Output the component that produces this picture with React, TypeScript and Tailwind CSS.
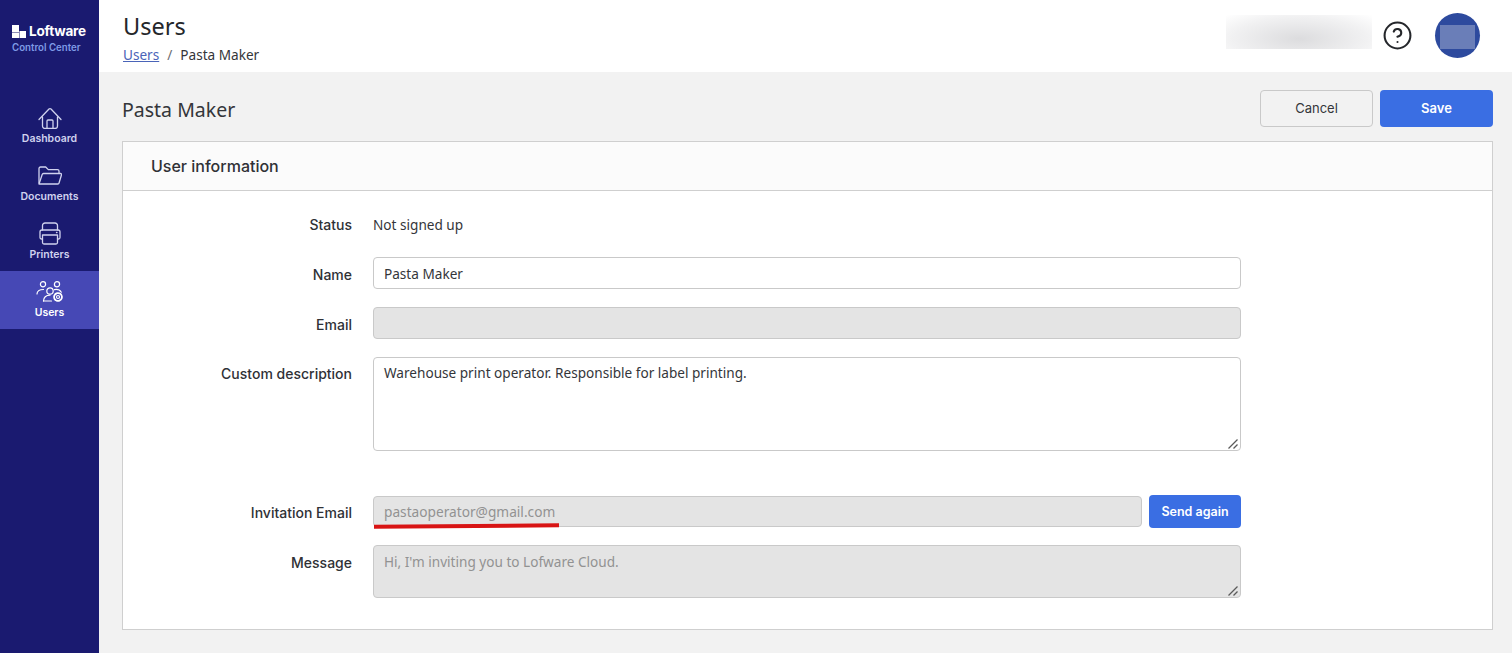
import { CircleHelp } from "lucide-react";
import type { ReactNode } from "react";

const BODY = "font-['Noto_Sans','Inter',sans-serif]";

function HomeIcon() {
  return (
    <svg width="24" height="22" viewBox="0 0 24 22" fill="none" stroke="currentColor" strokeWidth="1.3" strokeLinejoin="round" strokeLinecap="round">
      <path d="M1 12.500 11 2a1.400 1.400 0 0 1 2 0l10 10.500" />
      <path d="M4.500 10v9a2.500 2.500 0 0 0 2.500 2.500h10a2.500 2.500 0 0 0 2.500-2.500v-9" />
      <path d="M9 21.500V14a1 1 0 0 1 1-1h4a1 1 0 0 1 1 1v7.500" />
    </svg>
  );
}

function FolderIcon() {
  return (
    <svg width="24" height="19" viewBox="0 0 24 19" fill="none" stroke="currentColor" strokeWidth="1.3" strokeLinejoin="round" strokeLinecap="round">
      <path d="M1 17V2.500A1.500 1.500 0 0 1 2.500 1h5.200l2.600 2.600h9.200a1.500 1.500 0 0 1 1.500 1.500v2" />
      <path d="M5.500 7.500h17a1 1 0 0 1 1 1.300l-2.400 8a1.500 1.500 0 0 1-1.400 1.200H1l3.200-9.500a1.500 1.500 0 0 1 1.300-1Z" />
    </svg>
  );
}

function PrinterIcon() {
  return (
    <svg width="22" height="23" viewBox="0 0 22 23" fill="none" stroke="currentColor" strokeWidth="1.3" strokeLinejoin="round" strokeLinecap="round">
      <path d="M3.500 8V3.500A2.500 2.500 0 0 1 6 1h10a2.500 2.500 0 0 1 2.500 2.500V8" />
      <path d="M3.500 17H2.500A1.500 1.500 0 0 1 1 15.500V10a2 2 0 0 1 2-2h16a2 2 0 0 1 2 2v5.500a1.500 1.500 0 0 1-1.500 1.500h-1" />
      <path d="M3.500 13h15v7.500a1.500 1.500 0 0 1-1.500 1.500H5a1.500 1.500 0 0 1-1.500-1.500Z" />
      <path d="M17.500 10.500h.5" />
    </svg>
  );
}

function UsersGearIcon() {
  return (
    <svg width="28" height="21" viewBox="0 0 28 21" fill="none" stroke="currentColor" strokeWidth="1.2" strokeLinecap="round" strokeLinejoin="round">
      <circle cx="7" cy="3.200" r="2.600" />
      <circle cx="21" cy="3.200" r="2.600" />
      <path d="M1 13c0-2.800 2.300-4.500 6.500-4.500" />
      <path d="M18.500 8.600c2.800-.5 5.500.5 6.800 2.600" />
      <circle cx="14" cy="10" r="3.200" />
      <path d="M7.500 20c0-3.800 2.500-5.800 6.500-5.800" />
      <path d="M7.500 20h8" />
      <circle cx="22" cy="16" r="1.500" />
      <circle cx="22" cy="16" r="3.900" strokeDasharray="2 .9" strokeWidth="1.800" />
    </svg>
  );
}

function LogoMark() {
  return (
    <svg width="14" height="13" viewBox="0 0 14 13" fill="#fff">
      <rect x="0" y="0" width="7" height="7" />
      <rect x="0" y="7.500" width="7" height="5.500" />
      <rect x="7.500" y="6" width="6.500" height="7" />
    </svg>
  );
}

function ResizeGrip() {
  return (
    <svg width="10" height="10" viewBox="0 0 10 10" fill="none" stroke="#5a5a5a" strokeWidth="1.300" className="absolute right-[3px] bottom-[2px] pointer-events-none">
      <path d="M0.500 9.500 9.500 0.500" />
      <path d="M5.500 9.500 9.500 5.500" />
    </svg>
  );
}

function NavItem({ icon, label, active }: { icon: ReactNode; label: string; active?: boolean }) {
  return (
    <div
      className={`h-[58px] pb-[1px] flex flex-col items-center justify-center font-['Inter',sans-serif] ${
        active ? "bg-[#4648b5] text-white" : "text-[#d0d2ee]"
      }`}
    >
      <div className="h-[24px] flex items-center justify-center">{icon}</div>
      <span className="mt-[2px] text-[10.5px] leading-[14px] font-semibold">{label}</span>
    </div>
  );
}

function Field({
  label,
  children,
  className = "",
  labelClass = "",
}: {
  label: string;
  children: ReactNode;
  className?: string;
  labelClass?: string;
}) {
  return (
    <div className={`flex ${className}`}>
      <div className={`w-[250px] pr-[21px] shrink-0 text-right text-sm leading-[20px] font-medium text-[#2f3136] font-['Inter',sans-serif] ${labelClass}`}>
        {label}
      </div>
      <div className="w-[868px] shrink-0">{children}</div>
    </div>
  );
}

export default function App() {
  return (
    <div className={`${BODY} w-[1512px] h-[653px] flex bg-[#f2f2f2] overflow-hidden text-[#34363a]`}>
      <aside className="w-[99px] shrink-0 bg-[#1a1a70]">
        <div className="pt-[23px] pl-[12px] font-['Inter',sans-serif]">
          <div className="flex items-center gap-[3px]">
            <LogoMark />
            <span className="text-[13.500px] leading-[16px] font-bold text-white tracking-[-0.2px]">Loftware</span>
          </div>
          <div className="mt-[2px] text-[9.700px] leading-[14px] font-semibold text-[#7f9be6]">Control Center</div>
        </div>
        <nav className="mt-[42px]">
          <NavItem icon={<HomeIcon />} label="Dashboard" />
          <NavItem icon={<FolderIcon />} label="Documents" />
          <NavItem icon={<PrinterIcon />} label="Printers" />
          <NavItem icon={<UsersGearIcon />} label="Users" active />
        </nav>
      </aside>

      <div className="flex-1 min-w-0">
        <header className="h-[72px] bg-white flex items-start pl-[24px]">
          <div className="pt-[11px]">
            <h1 className="text-[23.500px] leading-[30px] font-normal text-[#25272b]">Users</h1>
            <div className="mt-[4px] text-[13.600px] leading-[20px] flex">
              <span className="text-[#4a64b8] underline">Users</span>
              <span className="mx-[8px] text-[#6b6d72]">/</span>
              <span>Pasta Maker</span>
            </div>
          </div>
          <div className="ml-auto flex items-center pt-[13px] pr-[32px]">
            <div className="w-[146px] h-[34px] mb-[8px] bg-[radial-gradient(ellipse_at_50%_70%,#dcdcde_0%,#f1f1f2_65%,#ffffff_100%)]" />
            <CircleHelp size={31} strokeWidth={1.6} className="ml-[10px] text-[#25272b]" />
            <div className="ml-[22px] w-[45px] h-[45px] rounded-full bg-[#2d4a9e] flex items-center justify-center pt-[2px]">
              <div className="w-[35px] h-[24px] bg-[#6a7eb8]" />
            </div>
          </div>
        </header>

        <main className="pl-[23px] pr-[19px]">
          <div className="h-[69px] flex items-center justify-between pt-[3px]">
            <h2 className="text-[19.500px] leading-[28px] font-normal text-[#34363a] pt-[3px]">Pasta Maker</h2>
            <div className="flex gap-[7px]">
              <button className="w-[113px] h-[37px] pt-[1px] rounded-[4px] border border-[#c9c9c9] bg-[#f2f2f2] text-[13px] font-normal font-['Inter',sans-serif]">Cancel</button>
              <button className="w-[113px] h-[37px] pt-[1px] rounded-[4px] bg-[#3a6ee3] text-white text-[13px] font-semibold font-['Inter',sans-serif]">Save</button>
            </div>
          </div>

          <section className="border border-[#cfcfcf] bg-white h-[489px]">
            <div className="h-[49px] border-b border-[#cfcfcf] bg-[#fbfbfb] flex items-center pl-[28px] text-base font-medium text-[#2f3136] font-['Inter',sans-serif]">
              User information
            </div>
            <div className="pt-[24px]">
              <Field label="Status">
                <div className="text-[13.600px] leading-[20px]">Not signed up</div>
              </Field>
              <Field label="Name" className="mt-[22px]" labelClass="pt-[8px]">
                <input
                  readOnly
                  value="Pasta Maker"
                  className="block w-full h-[32px] rounded-[4px] border border-[#c9c9c9] bg-white px-[10px] text-[13.600px] outline-none"
                />
              </Field>
              <Field label="Email" className="mt-[18px]" labelClass="pt-[8px]">
                <div className="w-full h-[32px] rounded-[4px] border border-[#c9c9c9] bg-[#e4e4e4]" />
              </Field>
              <Field label="Custom description" className="mt-[18px]" labelClass="pt-[7px]">
                <div className="relative">
                  <textarea
                    readOnly
                    value="Warehouse print operator. Responsible for label printing."
                    className="block w-full h-[94px] resize-none rounded-[4px] border border-[#c9c9c9] bg-white px-[10px] py-[5px] text-[13.600px] outline-none"
                  />
                  <ResizeGrip />
                </div>
              </Field>
              <Field label="Invitation Email" className="mt-[44px]" labelClass="pt-[8px]">
                <div className="flex items-center gap-[7px]">
                  <div className="relative flex-1">
                    <input
                      readOnly
                      value="pastaoperator@gmail.com"
                      className="block w-full h-[31px] rounded-[4px] border border-[#c9c9c9] bg-[#e4e4e4] px-[10px] text-[13.700px] text-[#929292] outline-none"
                    />
                    <div className="absolute left-[1px] top-[28px] w-[185px] h-[4px] bg-[#d81414] -rotate-[0.4deg]" />
                  </div>
                  <button className="w-[92px] h-[33px] pt-[1px] rounded-[4px] bg-[#3a6ee3] text-white text-[12.500px] font-semibold font-['Inter',sans-serif]">Send again</button>
                </div>
              </Field>
              <Field label="Message" className="mt-[17px]" labelClass="pt-[8px]">
                <div className="relative">
                  <textarea
                    readOnly
                    value="Hi, I'm inviting you to Lofware Cloud."
                    className="block w-full h-[53px] resize-none rounded-[4px] border border-[#c9c9c9] bg-[#e4e4e4] px-[10px] pt-[6px] pb-[5px] text-[13.600px] text-[#929292] outline-none"
                  />
                  <ResizeGrip />
                </div>
              </Field>
            </div>
          </section>
        </main>
      </div>
    </div>
  );
}
